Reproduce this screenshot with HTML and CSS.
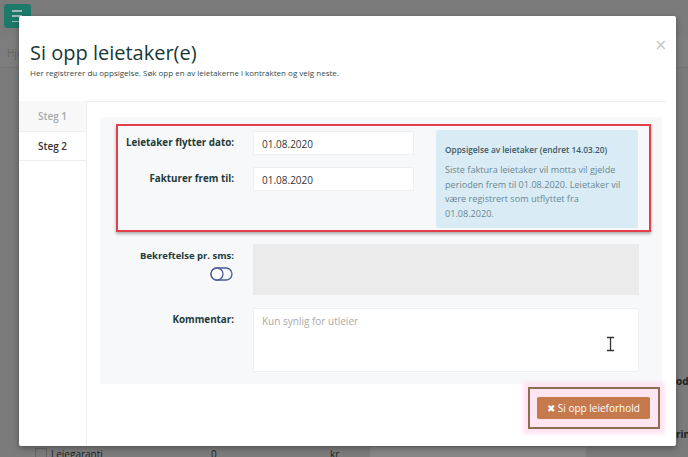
FILE: index.html
```html
<!DOCTYPE html>
<html lang="no">

<head>
    <meta charset="UTF-8" />
    <meta name="viewport" content="width=device-width, initial-scale=1" />
    <title>Si opp leietaker(e)</title>
    <link rel="stylesheet" href="styles.css">
</head>

<body>
    <!-- siden bak dialogen -->
    <div class="page">
        <div class="topbar">
            <button class="menu-btn"><span></span><span></span><span></span></button>
        </div>
        <div class="subnav">Hjem</div>
        <div class="page-main">
            <div class="page-table">
                <div class="table-row">
                    <span class="check"></span>
                    <span class="cell-name">Leiegaranti</span>
                    <span class="cell-num">0</span>
                    <span class="cell-unit">kr</span>
                    <span class="cell-bar"></span>
                </div>
            </div>
            <div class="page-side">
                <div class="side-label first">odato</div>
                <div class="side-label">ring</div>
            </div>
        </div>
    </div>

    <div class="modal">
        <div class="modal-header">
            <h1 class="modal-title">Si opp leietaker(e)</h1>
            <p class="modal-sub">Her registrerer du oppsigelse. Søk opp en av leietakerne i kontrakten og velg neste.</p>
            <button class="close">&times;</button>
        </div>

        <div class="modal-body">
            <div class="tabs">
                <div class="tab">Steg 1</div>
                <div class="tab active">Steg 2</div>
                <div class="tab-rest"></div>
            </div>

            <div class="tab-content">
                <div class="panel">
                    <div class="top-section">
                        <div class="fields">
                            <label class="form-label row-label">Leietaker flytter dato:</label>
                            <div class="input">01.08.2020</div>
                            <label class="form-label row-label">Fakturer frem til:</label>
                            <div class="input">01.08.2020</div>
                        </div>
                        <div class="info">
                            <div class="info-title">Oppsigelse av leietaker (endret 14.03.20)</div>
                            <div class="info-text">Siste faktura leietaker vil motta vil gjelde perioden frem til 01.08.2020. Leietaker vil være registrert som utflyttet fra 01.08.2020.</div>
                        </div>
                    </div>

                    <div class="form-row sms-row">
                        <div class="form-label">
                            <div>Bekreftelse pr. sms:</div>
                            <svg class="toggle" width="24" height="14" viewBox="0 0 24 14">
                                <rect x="1" y="1" width="21" height="12" rx="6" fill="none" stroke="#4b5a98" stroke-width="1.3" />
                                <circle cx="7" cy="7" r="6" fill="#fff" stroke="#4b5a98" stroke-width="1.3" />
                            </svg>
                        </div>
                        <div class="sms-box"></div>
                    </div>

                    <div class="form-row comment-row">
                        <label class="form-label">Kommentar:</label>
                        <div class="textarea">
                            <span class="placeholder">Kun synlig for utleier</span>
                            <svg class="ibeam" width="9" height="16" viewBox="0 0 9 16">
                                <path d="M1 1.5h7M4.5 1.5v13M1 14.5h7" fill="none" stroke="#333" stroke-width="1.3" />
                            </svg>
                        </div>
                    </div>
                </div>

                <div class="footer">
                    <div class="highlight">
                        <button class="btn-danger">&#10006; Si opp leieforhold</button>
                    </div>
                </div>
            </div>
        </div>
    </div>
</body>

</html>
```

FILE: styles.css
```css
body {
    margin: 0;
    height: 457px;
    overflow: hidden;
    background: #7b7b7b;
    font-family: "Open Sans", sans-serif;
    position: relative;
}

/* siden bak */
.page {
    height: 457px;
    display: flex;
    flex-direction: column;
}

.topbar {
    height: 36px;
    padding: 4px;
    box-sizing: border-box;
}

.menu-btn {
    width: 27px;
    height: 24px;
    border: none;
    border-radius: 3px;
    background: #1d7a6a;
    padding: 6px 8px;
    display: flex;
    flex-direction: column;
    justify-content: space-between;
}

.menu-btn span {
    display: block;
    height: 1.5px;
    width: 10px;
    background: #9fb9b4;
}

.subnav {
    height: 31px;
    line-height: 34px;
    padding-left: 7px;
    font-size: 10px;
    color: #666;
    border-bottom: 1px solid #747474;
    background: #7d7d7d;
}

.page-main {
    flex: 1;
    display: flex;
}

.page-table {
    flex: 1;
    display: flex;
    flex-direction: column;
    justify-content: flex-end;
    padding-left: 35px;
}

.table-row {
    height: 10px;
    display: flex;
    align-items: flex-start;
    font-size: 10px;
    color: #222;
    line-height: 14px;
}

.check {
    width: 10px;
    height: 10px;
    border: 1px solid #666;
    margin-top: 1px;
}

.cell-name {
    width: 150px;
    padding-left: 4px;
}

.cell-num {
    width: 119px;
    padding-left: 10px;
}

.cell-unit {
    width: 40px;
}

.cell-bar {
    width: 216px;
    height: 10px;
    background: #868686;
}

.page-side {
    width: 12px;
    padding-top: 306px;
}

.side-label {
    font-size: 10px;
    font-weight: bold;
    color: #222;
    white-space: nowrap;
    line-height: 14px;
}

.side-label.first {
    margin-bottom: 39px;
}

/* dialogen */
.modal {
    position: absolute;
    left: 19px;
    top: 16px;
    width: 657px;
    height: 430px;
    background: #fff;
    border-radius: 2px;
    box-shadow: 0 2px 6px rgba(0, 0, 0, 0.35);
    display: flex;
    flex-direction: column;
}

.modal-header {
    position: relative;
    padding: 25px 11px 23px 11px;
}

.modal-title {
    margin: 0;
    font-size: 20px;
    line-height: 24px;
    font-weight: normal;
    color: #183838;
}

.modal-sub {
    margin: 2px 0 0 0;
    font-size: 8px;
    line-height: 11px;
    color: #2d4c4c;
}

.close {
    position: absolute;
    right: 9px;
    top: 20px;
    border: none;
    background: none;
    font-size: 15px;
    color: #c4c4c4;
    padding: 0;
    font-family: "DejaVu Sans", sans-serif;
}

.modal-body {
    flex: 1;
    display: flex;
    padding-right: 10px;
}

.tabs {
    width: 67px;
    display: flex;
    flex-direction: column;
}

.tab {
    height: 30px;
    line-height: 30px;
    padding-left: 19px;
    font-size: 10px;
    font-weight: 600;
    color: #a3abab;
    background: #f8f8f8;
    border-bottom: 1px solid #eee;
}

.tab.active {
    height: 28px;
    line-height: 28px;
    color: #333;
    background: #fff;
}

.tab-content {
    flex: 1;
    border-top: 1px solid #eee;
    border-left: 1px solid #eee;
    padding: 15px 4px 0 13px;
}

.panel {
    background: #f6f8f9;
    padding: 7px 11px 12px 16px;
}

.top-section {
    border: 2px solid #e2404a;
    box-shadow: 0 2px 3px rgba(0, 0, 0, 0.3);
    padding: 5px 10px 2px 0;
    display: flex;
    align-items: flex-start;
}

.fields {
    display: grid;
    grid-template-columns: 116px 161px;
    column-gap: 19px;
    row-gap: 12px;
}

.form-label {
    text-align: right;
    font-size: 9.8px;
    font-weight: bold;
    color: #233a3a;
    white-space: nowrap;
}

.row-label {
    line-height: 24px;
}

.input {
    height: 24px;
    line-height: 24px;
    background: #fff;
    border: 1px solid #f0f0f0;
    box-sizing: border-box;
    padding-left: 8px;
    font-size: 10px;
    color: #333;
}

.info {
    width: 202px;
    margin-left: 22px;
    margin-top: -1px;
    box-sizing: border-box;
    height: 98px;
    background: #d9ecf5;
    border-radius: 2px;
    padding: 14px 9px 0 9px;
}

.info-title {
    font-size: 8.3px;
    font-weight: 600;
    color: #3d5a66;
    line-height: 12px;
    margin-bottom: 7px;
}

.info-text {
    font-size: 9.1px;
    line-height: 14.7px;
    color: #6a8792;
}

.form-row {
    display: grid;
    grid-template-columns: 118px 1fr;
    column-gap: 19px;
    margin-right: 12px;
}

.sms-row {
    margin-top: 12px;
}

.sms-row .form-label {
    padding-top: 6px;
    line-height: 12px;
    font-size: 9.5px;
}

.toggle {
    display: block;
    margin: 5px 0 0 auto;
}

.sms-box {
    height: 51px;
    background: #ebebeb;
}

.comment-row {
    margin-top: 13px;
}

.comment-row .form-label {
    padding-top: 6px;
    line-height: 12px;
}

.textarea {
    position: relative;
    height: 64px;
    background: #fff;
    border: 1px solid #eef0f0;
    box-sizing: border-box;
    padding: 5px 8px;
    font-size: 10px;
    line-height: 14px;
}

.placeholder {
    color: #a9a9a9;
}

.ibeam {
    position: absolute;
    right: 23px;
    top: 27px;
}

.footer {
    display: flex;
    justify-content: flex-end;
    padding: 3px 2px 0 0;
}

.highlight {
    border: 2px solid #8e6c50;
    background: #fde6f1;
    box-shadow: 0 0 4px 5px rgba(253, 225, 240, 0.9);
    padding: 8px 8px 8px 7px;
}

.btn-danger {
    display: block;
    width: 113px;
    height: 22px;
    border: none;
    border-radius: 2px;
    background: #c5794d;
    color: #fff;
    font-family: "Open Sans", sans-serif;
    font-size: 10px;
    padding: 0;
}
```
